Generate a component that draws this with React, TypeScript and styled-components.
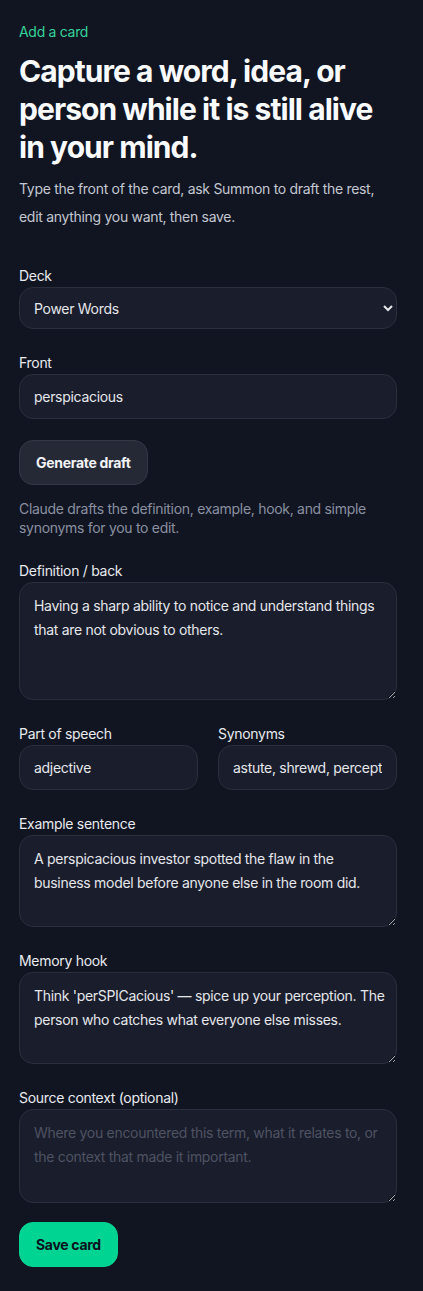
import React from "react";
import styled, { createGlobalStyle } from "styled-components";

const Global = createGlobalStyle`
  html, body { margin: 0; padding: 0; background: #111522; }
  body { font-family: Inter, "Noto Sans", sans-serif; color: #e5e7eb; -webkit-font-smoothing: antialiased; letter-spacing: -0.3px; }
  * { box-sizing: border-box; }
`;

const Page = styled.main`
  padding: 22px 26px 25px 19px;
  display: flex;
  flex-direction: column;
  min-height: 1291px;
`;

const Eyebrow = styled.div`
  color: #34d399;
  font-size: 14px;
  line-height: 20px;
`;

const Title = styled.h1`
  margin: 10px 0 0;
  font-size: 30px;
  line-height: 38px;
  font-weight: 700;
  letter-spacing: -0.95px;
  color: #f8fafc;
`;

const Lead = styled.p`
  margin: 9px 0 0;
  font-size: 14px;
  line-height: 28px;
  color: #c3c7d0;
`;

const Form = styled.form`
  margin-top: 35px;
  display: flex;
  flex-direction: column;
  gap: 24px;
`;

const Field = styled.label`
  display: flex;
  flex-direction: column;
  gap: 1px;
  min-width: 0;
`;

const LabelText = styled.span`
  font-size: 14px;
  line-height: 20px;
  color: #e8eaee;
`;

const boxStyles = `
  width: 100%;
  background: #1a1d2b;
  border: 1px solid #2b2f3d;
  border-radius: 14px;
  color: #e5e7eb;
  font-family: Inter, "Noto Sans", sans-serif;
  font-size: 14px;
  letter-spacing: -0.3px;
  outline: none;
`;

const Select = styled.select`
  ${boxStyles}
  height: 42px;
  padding: 0 8px 0 10px;
`;

const Input = styled.input`
  ${boxStyles}
  height: 45px;
  padding: 0 14px;
`;

const TextArea = styled.textarea<{ $h: number }>`
  ${boxStyles}
  height: ${(p) => p.$h}px;
  padding: 11px 8px 11px 14px;
  line-height: 24px;
  resize: vertical;
  &::placeholder { color: #4e5364; }
`;

const Row = styled.div`
  display: grid;
  grid-template-columns: 1fr 1fr;
  gap: 20px;
`;

const DraftBlock = styled.div`
  display: flex;
  flex-direction: column;
  align-items: flex-start;
  gap: 14px;
  margin-top: -3px;
`;

const Button = styled.button<{ $primary?: boolean }>`
  height: 45px;
  padding: 0 16px;
  border-radius: 14px;
  font-family: Inter, "Noto Sans", sans-serif;
  font-size: 14px;
  font-weight: 700;
  letter-spacing: -0.3px;
  cursor: pointer;
  border: 1px solid ${(p) => (p.$primary ? "#00d492" : "#343846")};
  background: ${(p) => (p.$primary ? "#00d492" : "#252936")};
  color: ${(p) => (p.$primary ? "#0b1120" : "#f3f4f6")};
`;

const Hint = styled.p`
  margin: 0;
  font-size: 14px;
  line-height: 19px;
  color: #8a90a0;
`;

const Actions = styled.div`
  display: flex;
  margin-top: -5px;
`;

export default function App() {
  return (
    <>
      <Global />
      <Page>
        <Eyebrow>Add a card</Eyebrow>
        <Title>Capture a word, idea, or person while it is still alive in your mind.</Title>
        <Lead>Type the front of the card, ask Summon to draft the rest, edit anything you want, then save.</Lead>
        <Form onSubmit={(e) => e.preventDefault()}>
          <Field>
            <LabelText>Deck</LabelText>
            <Select defaultValue="power">
              <option value="power">Power Words</option>
            </Select>
          </Field>
          <Field>
            <LabelText>Front</LabelText>
            <Input defaultValue="perspicacious" />
          </Field>
          <DraftBlock>
            <Button type="button">Generate draft</Button>
            <Hint>Claude drafts the definition, example, hook, and simple synonyms for you to edit.</Hint>
          </DraftBlock>
          <Field>
            <LabelText>Definition / back</LabelText>
            <TextArea $h={118} defaultValue="Having a sharp ability to notice and understand things that are not obvious to others." />
          </Field>
          <Row>
            <Field>
              <LabelText>Part of speech</LabelText>
              <Input defaultValue="adjective" />
            </Field>
            <Field>
              <LabelText>Synonyms</LabelText>
              <Input defaultValue="astute, shrewd, perceptive" />
            </Field>
          </Row>
          <Field>
            <LabelText>Example sentence</LabelText>
            <TextArea $h={92} defaultValue="A perspicacious investor spotted the flaw in the business model before anyone else in the room did." />
          </Field>
          <Field>
            <LabelText>Memory hook</LabelText>
            <TextArea $h={92} defaultValue="Think 'perSPICacious' — spice up your perception. The person who catches what everyone else misses." />
          </Field>
          <Field>
            <LabelText>Source context (optional)</LabelText>
            <TextArea $h={94} placeholder="Where you encountered this term, what it relates to, or the context that made it important." />
          </Field>
          <Actions>
            <Button type="submit" $primary>Save card</Button>
          </Actions>
        </Form>
      </Page>
    </>
  );
}
